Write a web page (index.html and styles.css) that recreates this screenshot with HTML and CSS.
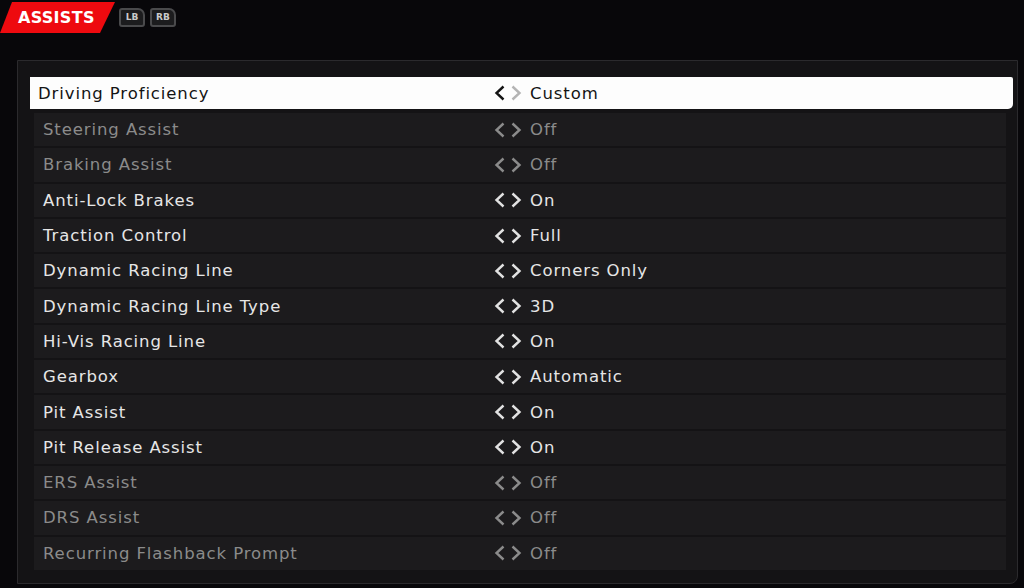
FILE: index.html
```html
<!DOCTYPE html>
<html lang="en">
<head>
    <meta charset="UTF-8">
    <meta name="viewport" content="width=device-width, initial-scale=1.0">
    <title>Assists</title>
    <link rel="stylesheet" href="styles.css">
</head>
<body>
    <div class="topbar">
        <div class="tab">ASSISTS</div>
        <span class="bumper">LB</span>
        <span class="bumper">RB</span>
    </div>

    <div class="panel">
        <div class="list">
            <div class="row selected">
                <span class="label">Driving Proficiency</span>
                <svg class="arrows" viewBox="0 0 30 16"><polyline class="prev" points="9.5,1.5 2.5,8 9.5,14.5"/><polyline class="next" points="18.5,1.5 25.5,8 18.5,14.5"/></svg>
                <span class="value">Custom</span>
            </div>
            <div class="row disabled">
                <span class="label">Steering Assist</span>
                <svg class="arrows" viewBox="0 0 30 16"><polyline class="prev" points="9.5,1.5 2.5,8 9.5,14.5"/><polyline class="next" points="18.5,1.5 25.5,8 18.5,14.5"/></svg>
                <span class="value">Off</span>
            </div>
            <div class="row disabled">
                <span class="label">Braking Assist</span>
                <svg class="arrows" viewBox="0 0 30 16"><polyline class="prev" points="9.5,1.5 2.5,8 9.5,14.5"/><polyline class="next" points="18.5,1.5 25.5,8 18.5,14.5"/></svg>
                <span class="value">Off</span>
            </div>
            <div class="row">
                <span class="label">Anti-Lock Brakes</span>
                <svg class="arrows" viewBox="0 0 30 16"><polyline class="prev" points="9.5,1.5 2.5,8 9.5,14.5"/><polyline class="next" points="18.5,1.5 25.5,8 18.5,14.5"/></svg>
                <span class="value">On</span>
            </div>
            <div class="row">
                <span class="label">Traction Control</span>
                <svg class="arrows" viewBox="0 0 30 16"><polyline class="prev" points="9.5,1.5 2.5,8 9.5,14.5"/><polyline class="next" points="18.5,1.5 25.5,8 18.5,14.5"/></svg>
                <span class="value">Full</span>
            </div>
            <div class="row">
                <span class="label">Dynamic Racing Line</span>
                <svg class="arrows" viewBox="0 0 30 16"><polyline class="prev" points="9.5,1.5 2.5,8 9.5,14.5"/><polyline class="next" points="18.5,1.5 25.5,8 18.5,14.5"/></svg>
                <span class="value">Corners Only</span>
            </div>
            <div class="row">
                <span class="label">Dynamic Racing Line Type</span>
                <svg class="arrows" viewBox="0 0 30 16"><polyline class="prev" points="9.5,1.5 2.5,8 9.5,14.5"/><polyline class="next" points="18.5,1.5 25.5,8 18.5,14.5"/></svg>
                <span class="value">3D</span>
            </div>
            <div class="row">
                <span class="label">Hi-Vis Racing Line</span>
                <svg class="arrows" viewBox="0 0 30 16"><polyline class="prev" points="9.5,1.5 2.5,8 9.5,14.5"/><polyline class="next" points="18.5,1.5 25.5,8 18.5,14.5"/></svg>
                <span class="value">On</span>
            </div>
            <div class="row">
                <span class="label">Gearbox</span>
                <svg class="arrows" viewBox="0 0 30 16"><polyline class="prev" points="9.5,1.5 2.5,8 9.5,14.5"/><polyline class="next" points="18.5,1.5 25.5,8 18.5,14.5"/></svg>
                <span class="value">Automatic</span>
            </div>
            <div class="row">
                <span class="label">Pit Assist</span>
                <svg class="arrows" viewBox="0 0 30 16"><polyline class="prev" points="9.5,1.5 2.5,8 9.5,14.5"/><polyline class="next" points="18.5,1.5 25.5,8 18.5,14.5"/></svg>
                <span class="value">On</span>
            </div>
            <div class="row">
                <span class="label">Pit Release Assist</span>
                <svg class="arrows" viewBox="0 0 30 16"><polyline class="prev" points="9.5,1.5 2.5,8 9.5,14.5"/><polyline class="next" points="18.5,1.5 25.5,8 18.5,14.5"/></svg>
                <span class="value">On</span>
            </div>
            <div class="row disabled">
                <span class="label">ERS Assist</span>
                <svg class="arrows" viewBox="0 0 30 16"><polyline class="prev" points="9.5,1.5 2.5,8 9.5,14.5"/><polyline class="next" points="18.5,1.5 25.5,8 18.5,14.5"/></svg>
                <span class="value">Off</span>
            </div>
            <div class="row disabled">
                <span class="label">DRS Assist</span>
                <svg class="arrows" viewBox="0 0 30 16"><polyline class="prev" points="9.5,1.5 2.5,8 9.5,14.5"/><polyline class="next" points="18.5,1.5 25.5,8 18.5,14.5"/></svg>
                <span class="value">Off</span>
            </div>
            <div class="row disabled">
                <span class="label">Recurring Flashback Prompt</span>
                <svg class="arrows" viewBox="0 0 30 16"><polyline class="prev" points="9.5,1.5 2.5,8 9.5,14.5"/><polyline class="next" points="18.5,1.5 25.5,8 18.5,14.5"/></svg>
                <span class="value">Off</span>
            </div>
        </div>
    </div>
</body>
</html>
```

FILE: styles.css
```css
body {
    margin: 0;
    background-color: #08070a;
    font-family: "DejaVu Sans", "Liberation Sans", sans-serif;
    color: #e6e6e6;
    width: 1024px;
    height: 588px;
    overflow: hidden;
}
.topbar {
    height: 60px;
    display: flex;
    align-items: flex-start;
    gap: 5px;
}
.tab {
    margin-top: 2px;
    width: 115px;
    height: 31px;
    box-sizing: border-box;
    padding-left: 18px;
    background-color: #ee0a0f;
    clip-path: polygon(12px 0, 115px 0, 100px 100%, 0 100%);
    color: #fff;
    font-weight: bold;
    font-size: 16px;
    line-height: 31px;
    letter-spacing: 0.3px;
}
.bumper {
    margin-top: 8px;
    width: 22px;
    height: 15px;
    border: 2px solid #4a4a4c;
    border-radius: 3px 7px 3px 3px;
    background-color: #1c1c1e;
    color: #cacaca;
    font-size: 9px;
    font-weight: bold;
    line-height: 15px;
    text-align: center;
}
.tab + .bumper {
    margin-left: -1px;
}
.panel {
    margin-left: 17px;
    width: 1001px;
    height: 524px;
    box-sizing: border-box;
    border: 1px solid #2b2a2d;
    border-radius: 0 0 8px 0;
    background-color: #141315;
    padding: 16px 4px 0 12px;
}
.list {
    display: flex;
    flex-direction: column;
    gap: 2px;
}
.row {
    height: 33.3px;
    margin: 0 7px 0 4px;
    padding-left: 9px;
    display: flex;
    align-items: center;
    background-color: #1c1b1d;
    font-size: 16.5px;
    letter-spacing: 0.9px;
}
.row .label {
    width: 451px;
}
.arrows {
    width: 30px;
    height: 16px;
    margin-right: 6px;
    fill: none;
    stroke: #e2e2e2;
    stroke-width: 2.4;
}
.selected {
    height: 32px;
    margin: 0 0 2px 0;
    padding-left: 8px;
    background-color: #fdfdfd;
    color: #141414;
    border-radius: 0 2px 5px 0;
}
.selected .label {
    width: 456px;
}
.selected .prev {
    stroke: #141414;
}
.selected .next {
    stroke: #b4b4b4;
}
.disabled {
    color: #8b8b8b;
}
.disabled .arrows {
    stroke: #8b8b8b;
}
```
